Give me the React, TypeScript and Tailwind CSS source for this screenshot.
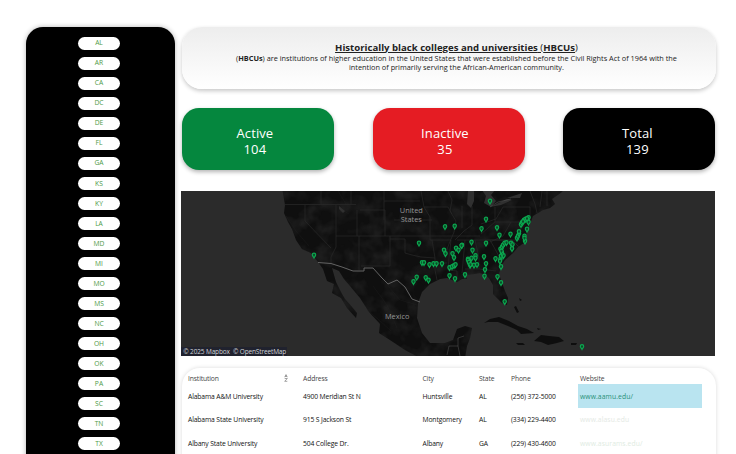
const STATES = ["AL", "AR", "CA", "DC", "DE", "FL", "GA", "KS", "KY", "LA", "MD", "MI", "MO", "MS", "NC", "OH", "OK", "PA", "SC", "TN", "TX"];

const ROWS = [
  ["Alabama A&M University", "4900 Meridian St N", "Huntsville", "AL", "(256) 372-5000", "www.aamu.edu/"],
  ["Alabama State University", "915 S Jackson St", "Montgomery", "AL", "(334) 229-4400", "www.alasu.edu"],
  ["Albany State University", "504 College Dr.", "Albany", "GA", "(229) 430-4600", "www.asurams.edu/"],
];

const PINS: [number, number][] = [
  [314, 255], [445, 226.5], [454.7, 226], [419, 243], [444, 250], [445.5, 253.5], [456, 248], [458.5, 250], [462, 245],
  [452.5, 253.5], [454, 257.5], [422, 262.5], [424, 262.5], [429.5, 264.5], [433.5, 263.5], [436.5, 263.5], [442, 263.5],
  [449.5, 267.5], [452, 266.5], [454, 265.5], [455.5, 264.5], [449.5, 275.5], [455, 278.5], [465, 274.5], [413.5, 281.5],
  [416.7, 277], [425.7, 277.5], [428.5, 280], [468, 259], [469, 262.5], [470, 265],
  [490, 201], [486, 219], [481.5, 228.5], [497, 227.5], [499.5, 235], [510.5, 234], [471.5, 242], [472.5, 250], [486, 243],
  [461.5, 245.5], [475.5, 255.5], [475.5, 258], [471.5, 258], [468, 260], [469, 262], [470.5, 264.5], [474, 265], [477, 264.5],
  [484, 256.5], [486, 263.5], [485, 269.5], [484.5, 276], [497.5, 276.5], [501, 282.5], [504.7, 301.5], [501, 266.5],
  [495.5, 258.5], [500.5, 259], [501, 256], [503.5, 255.5], [502, 253], [500.5, 249], [502, 247], [503, 245], [504.5, 243],
  [506.5, 242.5], [511, 243], [512.5, 244.5], [512, 248.5], [517, 238], [518, 236], [519, 233.5], [524.5, 236], [525, 241],
  [527, 229], [521, 224.5], [522, 222.5], [524, 220], [525.5, 219], [528.5, 217.5], [528.5, 222], [582, 346.5],
  [500, 261], [501.5, 251], [519, 231.5], [524.5, 238], [523, 221.5], [527, 218.5],
];

function Pin({ x, y }: { x: number; y: number }) {
  return (
    <path
      d={`M${x} ${y + 2.9}c-.5-1-1.7-1.8-1.7-3.1a1.7 1.7 0 0 1 3.4 0c0 1.3-1.2 2.1-1.7 3.1z`}
      fill="#0b4d29"
      stroke="#0ca850"
      strokeWidth="1.15"
    />
  );
}

function UsMap() {
  return (
    <svg viewBox="181 191 534 165" className="block h-[165px] w-[534px] bg-[#2b2b2b]" aria-label="Map">
      <defs>
        <filter id="relief" x="0" y="0" width="100%" height="100%">
          <feTurbulence type="fractalNoise" baseFrequency="0.06" numOctaves="3" seed="8" />
          <feColorMatrix values="0 0 0 0 0.18  0 0 0 0 0.18  0 0 0 0 0.18  1.8 0 0 0 -0.72" />
        </filter>
        <clipPath id="land">
          <path d="M282.5 190L285 205 284 213 288 222 292 229 296 240 302 249 311 253 318 262 323 269 327 281 334 284 332 293 341 298 347 308 356 318 357 313 352 307 345 299 342 294 336 282 332 268 339 271 344 279 350 286 360 298 369 312 380 324 379 333 393 342 405 350 420 358 465 358 467 346 470 338 472 328 465 326 457 329 453 340 445 343 430 343 422 333 417 318 418 303 422 292 430 284 440 279 447 278 457 282 462 279 467 279 465 275 474 274 480 273 485 275 489 278 493 285 493 294 502 303 507 305 508 298 505 291 502 283 499 274 501 266 505 260 513 253 518 247 524 243 527 238 526 230 530 224 533 216 543 210 550 208 555 204 552 199 562 192 563 190Z" />
        </clipPath>
      </defs>
      <g clipPath="url(#land)">
        <rect x="181" y="191" width="535" height="167" fill="#0f0f0f" />
        <rect x="270" y="191" width="300" height="167" filter="url(#relief)" opacity="0.2" />
        <g fill="none" stroke="#292929" strokeWidth="0.7">
          <path d="M284 204.5H356M321 191V204M305 205V221L331 248M336 205V236H480M351 191V204M357 210V236M336 236V247L331 257V264M360 210H385V236M384 191V220M359 236V270M390 236V266H361M390 239H405V253L412 255 421 257 435 258V270L437 280M384 201H420M394 220H432M421 191L424 207 430 217V240H451M424 207H448L452 214M432 240L435 258M448 191L452 200 450 211 456 221 454 232 449 244 444 257M436 263H447M451 240L449 258 448 270 457 271V278M462 206V228M472 206V225L464 231 455 240M481 224L496 219 503 207M457 240H520M465 240L462 273M475 240L479 258 479 269H465M490 240L500 258M479 269L496 271M495 207V222L481 234M503 207H530V220M495 222H529M511 222L503 236 490 242M487 240L512 240 521 249M530 191L535 204 537 213M542 191L540 207M547 190V206" />
          <path d="M286 216L296 231 309 246M341 209L349 214M338 191L346 204M362 306L378 319 391 331M373 286L387 305 397 328M388 286L400 300 417 305" strokeOpacity=".35" />
        </g>
        <path d="M468 191L474 191 474 201 471 208 467 204ZM482 190H495L491 195 496 201 491 207 484 203 486 196ZM490 207L507 199 512 200 501 205ZM507 198L522 193 520 198Z" fill="#303030" />
        <path d="M339 206L345 211 343 213 339 209Z" fill="#303030" />
      </g>
      <g fill="none" stroke="#636363">
        <path d="M318 262.5L331 263.5 342 267 353 271H364V268H373L382 278 388 284 397 280 405 287 412 299 420 302" strokeWidth="1" />
        <path d="M447 355L449 346H458V338L464 336M458 346L460 356M490 207L498 202 511 199" strokeWidth=".65" strokeOpacity=".65" />
      </g>
      <g fill="#0e0e0e">
        <path d="M484 323L490 319 499 317 509 321 518 326 527 329 534 333 521 334 517 330 508 326 498 322 488 322ZM516 343L523 343 525 345 518 345ZM534 341L541 335 549 336 559 337 564 341 557 343 548 345 541 342ZM571 343L577 343 576 345 571 345ZM514 307L516 306 519 312 517 313ZM519 298L522 300 520 301ZM537 328L541 329 538 330Z" />
      </g>
      <g fill="#969696" fontFamily="'Open Sans', 'Noto Sans', sans-serif" fontSize="7.4" textAnchor="middle">
        <text x="411.3" y="213">United</text>
        <text x="411.3" y="221.7">States</text>
        <text x="397.2" y="319">Mexico</text>
      </g>
      {PINS.map(([x, y], i) => (
        <Pin key={i} x={x} y={y} />
      ))}
      <rect x="181" y="347" width="106" height="9.5" fill="#20222e" />
      <text x="183.3" y="354" fill="#d2d3d8" fontFamily="'Open Sans', 'Noto Sans', sans-serif" fontSize="6.5" textLength="103" xmlSpace="preserve">
        © 2025 Mapbox  © OpenStreetMap
      </text>
    </svg>
  );
}

function Kpi({ label, value, tone }: { label: string; value: number; tone: string }) {
  return (
    <div className={`flex h-[62px] w-[152px] flex-col items-center justify-center rounded-[17px] pt-[4px] text-[13px] leading-[16.4px] tracking-[0.1px] text-white shadow-[0_2px_4px_rgba(0,0,0,0.3)] ${tone}`}>
      <span>{label}</span>
      <span>{value}</span>
    </div>
  );
}

const COLS = "grid grid-cols-[115px_119.5px_56.5px_32px_66.5px_124px] items-center";

export default function App() {
  return (
    <div className="flex h-[454px] w-[736px] overflow-hidden bg-white pl-[25.5px] pt-[26.5px] font-['Open_Sans','Noto_Sans',sans-serif]">
      <aside className="flex h-[470px] w-[149.5px] shrink-0 flex-col items-center gap-[6.53px] rounded-[17px] bg-black pr-[2.5px] pt-[10px] shadow-[0_0_5px_rgba(0,0,0,0.3)]">
        {STATES.map((s) => (
          <button key={s} className="flex h-[13.5px] w-[42px] shrink-0 items-center justify-center rounded-full bg-white pt-px text-[6.7px] leading-none text-[#4d9a46]">
            {s}
          </button>
        ))}
      </aside>
      <main className="ml-[7px] flex w-[535px] shrink-0 flex-col">
        <header className="h-[62.5px] w-[534px] shrink-0 rounded-[20px] bg-linear-to-b from-[#ededed] to-white pl-[15px] pt-[15px] text-center text-[#222] shadow-[0_2px_4px_rgba(0,0,0,0.22)]">
          <h1 className="text-[9.6px] leading-[12px] underline decoration-[0.8px] underline-offset-[1px]">
            <b>Historically black colleges and universities</b> (<b>HBCUs</b>)
          </h1>
          <p className="text-[7.33px] leading-[9px]">
            (<b>HBCUs</b>) are institutions of higher education in the United States that were established before the Civil Rights Act of 1964 with the
            <br />
            intention of primarily serving the African-American community.
          </p>
        </header>
        <section className="mt-[19.4px] flex w-[533.4px] shrink-0 justify-between pl-[0.4px]">
          <Kpi label="Active" value={104} tone="bg-[#05873e] pr-[7px]" />
          <Kpi label="Inactive" value={35} tone="bg-[#e51c23] pr-[8px]" />
          <Kpi label="Total" value={139} tone="bg-black pr-[4px]" />
        </section>
        <section className="-ml-[1px] mt-[20.6px] h-[165px] shrink-0">
          <UsMap />
        </section>
        <section className="mt-[12.5px] h-[120px] w-[534px] shrink-0 rounded-[18px] bg-white pl-[6px] pt-[5.3px] text-[6.75px] tracking-[-0.13px] shadow-[0_0_4px_rgba(0,0,0,0.15)]">
          <div className={`${COLS} h-[10.2px] text-[#444]`}>
            <span className="flex justify-between pr-[15px]">
              Institution
              <svg viewBox="0 0 4 8" className="h-[8px] w-[4px]" fill="none" stroke="#666" strokeWidth=".6">
                <path d="M.7 3.2L2 .6 3.3 3.2M1.1 2.4H2.9M.7 4.5H3.3L.7 7.3H3.3" />
              </svg>
            </span>
            <span>Address</span>
            <span>City</span>
            <span>State</span>
            <span>Phone</span>
            <span className="pl-[2.5px]">Website</span>
          </div>
          {ROWS.map((r, i) => (
            <div key={r[0]} className={`${COLS} h-[23.7px] text-[#111]`}>
              {r.slice(0, 5).map((c) => (
                <span key={c} className="whitespace-nowrap pt-[1.5px]">
                  {c}
                </span>
              ))}
              <a className={`flex h-full items-center pl-[2.5px] pt-[1.5px] tracking-[0.1px] ${i === 0 ? "bg-[#b9e4f0] text-[#299078]" : i === 1 ? "text-[#e4e9e4]" : "text-[#e0ebe2]"}`}>{r[5]}</a>
            </div>
          ))}
        </section>
      </main>
    </div>
  );
}
